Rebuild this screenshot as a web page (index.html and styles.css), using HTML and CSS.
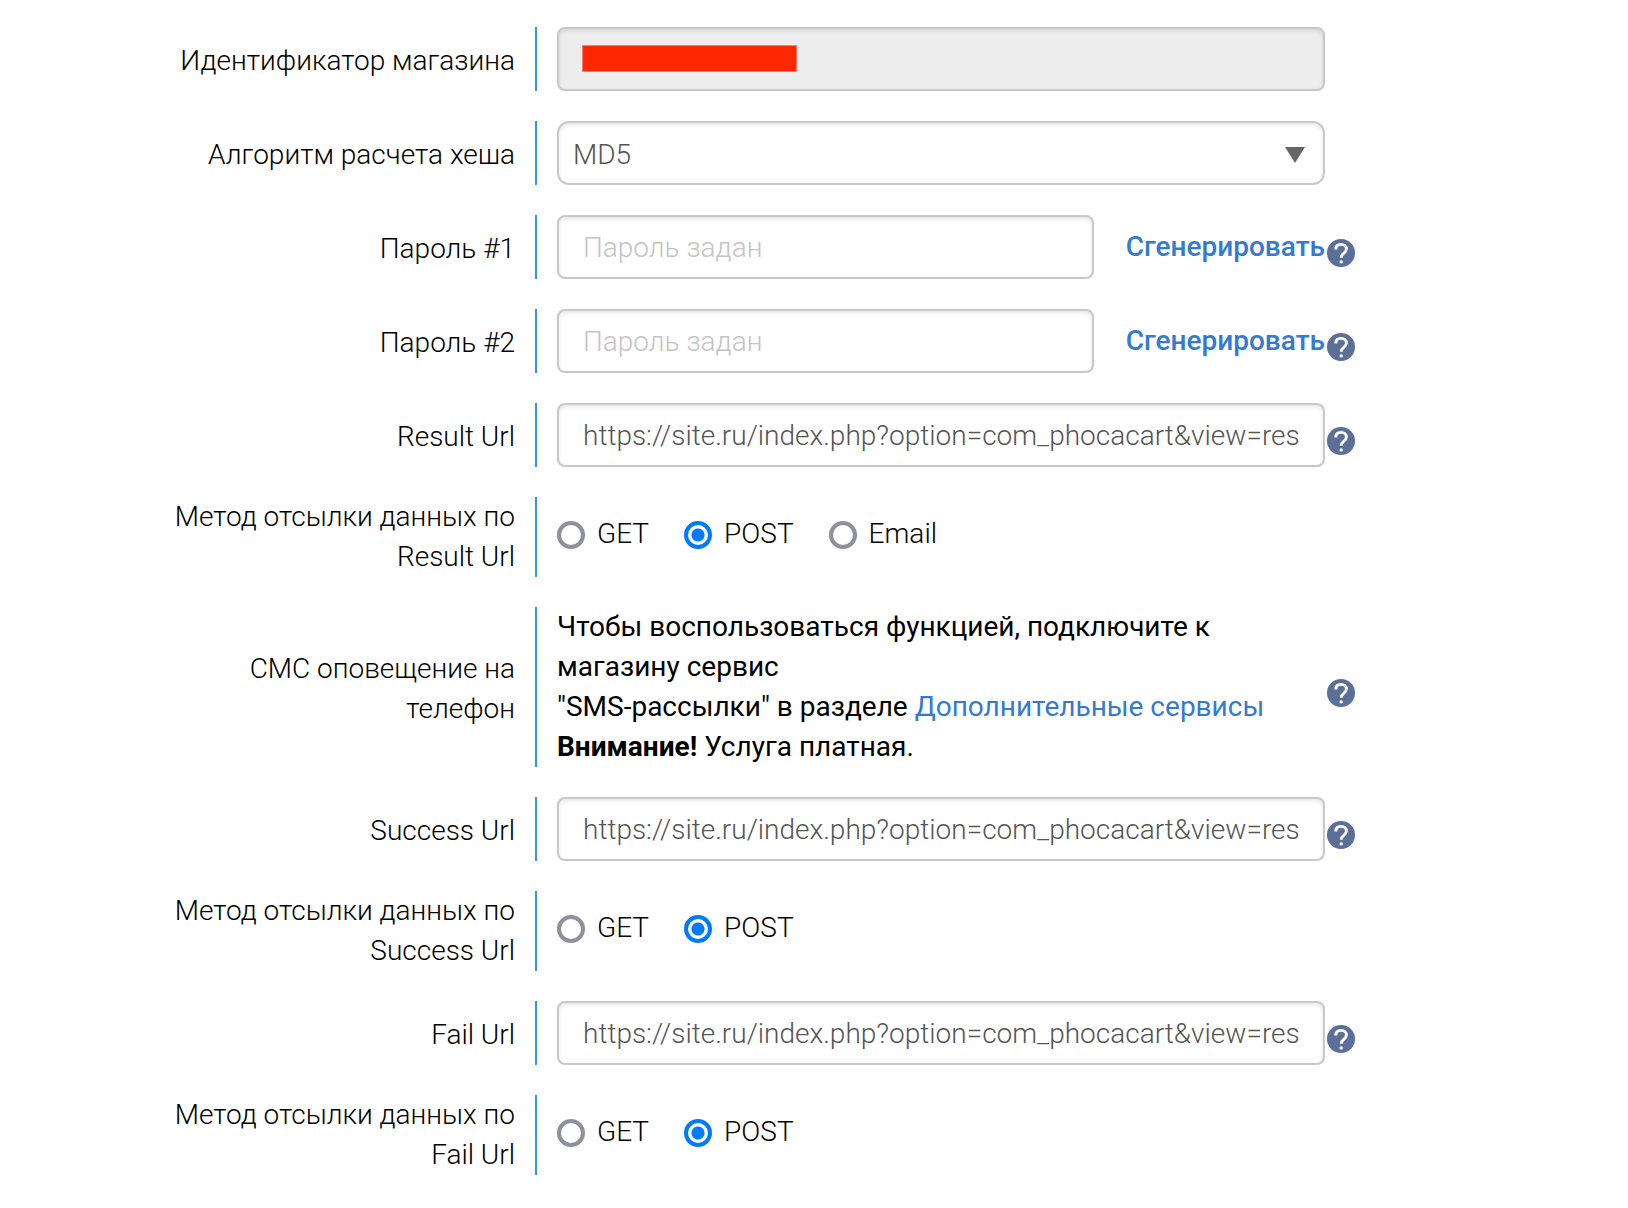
FILE: index.html
```html
<!DOCTYPE html>
<html lang="ru">
<head>
<meta charset="utf-8">
<meta name="viewport" content="width=device-width, initial-scale=1">
<title>Настройки магазина</title>
<link rel="stylesheet" href="styles.css">
</head>
<body>
<svg class="sprite" aria-hidden="true">
  <symbol id="help" viewBox="0 0 28 28">
    <circle cx="14" cy="14" r="14" fill="#5b6f98"/>
    <path d="M8.800 10.400C8.800 7 11 5.400 14 5.400s5.400 1.900 5.400 4.700c0 2.400-1.400 3.400-3 4.600-1.500 1.100-2.100 1.900-2.100 4.100" fill="none" stroke="#fff" stroke-width="2.900"/>
    <circle cx="14.200" cy="22.900" r="1.700" fill="#fff"/>
  </symbol>
</svg>
<form class="form">
  <div class="row">
    <label class="label label-field" for="shop-id">Идентификатор магазина</label>
    <div class="control redacted">
      <input class="input input-locked" id="shop-id" type="text" readonly>
      <span class="redaction"></span>
    </div>
  </div>
  <div class="row">
    <label class="label label-field" for="hash">Алгоритм расчета хеша</label>
    <div class="control select-wrap">
      <select class="input select" id="hash"><option>MD5</option></select>
    </div>
  </div>
  <div class="row">
    <label class="label label-field" for="pass1">Пароль #1</label>
    <div class="control password">
      <input class="input" id="pass1" type="password" placeholder="Пароль задан">
      <a class="link" href="#">Сгенерировать</a>
    </div>
    <button class="help" type="button" aria-label="Справка"><svg class="icon"><use href="#help"/></svg></button>
  </div>
  <div class="row">
    <label class="label label-field" for="pass2">Пароль #2</label>
    <div class="control password">
      <input class="input" id="pass2" type="password" placeholder="Пароль задан">
      <a class="link" href="#">Сгенерировать</a>
    </div>
    <button class="help" type="button" aria-label="Справка"><svg class="icon"><use href="#help"/></svg></button>
  </div>
  <div class="row">
    <label class="label label-field" for="result-url">Result Url</label>
    <div class="control"><input class="input" id="result-url" type="text" value="https://site.ru/index.php?option=com_phocacart&amp;view=res"></div>
    <button class="help" type="button" aria-label="Справка"><svg class="icon"><use href="#help"/></svg></button>
  </div>
  <div class="row" role="radiogroup" aria-labelledby="result-method">
    <span class="label" id="result-method">Метод отсылки данных по Result Url</span>
    <div class="control radios">
      <label class="option"><input class="radio" type="radio" name="result"><span>GET</span></label>
      <label class="option"><input class="radio" type="radio" name="result" checked><span>POST</span></label>
      <label class="option"><input class="radio" type="radio" name="result"><span>Email</span></label>
    </div>
  </div>
  <div class="row">
    <span class="label label-field">СМС оповещение на телефон</span>
    <p class="control note">Чтобы воспользоваться функцией, подключите к магазину сервис<br>"SMS-рассылки" в разделе <a class="note-link" href="#">Дополнительные сервисы</a><br><b>Внимание!</b> Услуга платная.</p>
    <button class="help" type="button" aria-label="Справка"><svg class="icon"><use href="#help"/></svg></button>
  </div>
  <div class="row">
    <label class="label label-field" for="success-url">Success Url</label>
    <div class="control"><input class="input" id="success-url" type="text" value="https://site.ru/index.php?option=com_phocacart&amp;view=res"></div>
    <button class="help" type="button" aria-label="Справка"><svg class="icon"><use href="#help"/></svg></button>
  </div>
  <div class="row" role="radiogroup" aria-labelledby="success-method">
    <span class="label" id="success-method">Метод отсылки данных по Success Url</span>
    <div class="control radios">
      <label class="option"><input class="radio" type="radio" name="success"><span>GET</span></label>
      <label class="option"><input class="radio" type="radio" name="success" checked><span>POST</span></label>
    </div>
  </div>
  <div class="row">
    <label class="label label-field" for="fail-url">Fail Url</label>
    <div class="control"><input class="input" id="fail-url" type="text" value="https://site.ru/index.php?option=com_phocacart&amp;view=res"></div>
    <button class="help" type="button" aria-label="Справка"><svg class="icon"><use href="#help"/></svg></button>
  </div>
  <div class="row" role="radiogroup" aria-labelledby="fail-method">
    <span class="label" id="fail-method">Метод отсылки данных по<br>Fail Url</span>
    <div class="control radios">
      <label class="option"><input class="radio" type="radio" name="fail"><span>GET</span></label>
      <label class="option"><input class="radio" type="radio" name="fail" checked><span>POST</span></label>
    </div>
  </div>
</form>
</body>
</html>
```
FILE: styles.css
```css
* {
  box-sizing: border-box;
}

body {
  margin: 0;
  background: #fff;
  color: #000;
  font: 300 28px/40px Roboto, sans-serif;
}

.sprite {
  display: none;
}

.form {
  display: flex;
  flex-direction: column;
  gap: 30px;
  padding: 27px 273px 33px 155px;
}

.row {
  display: grid;
  grid-template-columns: 382px minmax(0, 1fr) 30px;
  min-height: 64px;
}

.label {
  display: flex;
  flex-direction: column;
  justify-content: center;
  padding-right: 20px;
  border-right: 2px solid #3498db;
  text-align: right;
}

.label-field {
  padding-top: 4px;
}

.control {
  align-self: center;
  margin: 0 0 0 20px;
}

.input {
  display: block;
  width: 100%;
  height: 64px;
  padding: 0 24px;
  border: 2px solid #c8c8c8;
  border-radius: 8px;
  background: #fff;
  box-shadow: inset 0 2px 4px rgba(0, 0, 0, 0.1);
  color: #555;
  font: inherit;
}

.input::placeholder {
  color: #c4c4c4;
  opacity: 1;
}

.input-locked {
  background: #ededed;
}

.redacted,
.select-wrap {
  position: relative;
}

.redaction {
  position: absolute;
  top: 18px;
  left: 25px;
  width: 215px;
  height: 27px;
  border: 1px solid #fb7b66;
  background: #ff2800;
}

.select {
  padding: 3px 14px 0;
  border-radius: 12px;
  appearance: none;
}

.select-wrap::after {
  content: "";
  position: absolute;
  top: 26px;
  right: 20px;
  border: solid transparent;
  border-width: 16px 10px 0;
  border-top-color: #666;
  pointer-events: none;
}

.password {
  display: flex;
  align-items: center;
  gap: 32px;
}

.password .input {
  flex: 1;
  min-width: 0;
}

.link,
.note-link {
  color: #337ad2;
  text-decoration: none;
}

.link {
  font-weight: 500;
}

.help {
  align-self: center;
  justify-self: end;
  width: 28px;
  height: 28px;
  margin-top: 12px;
  padding: 0;
  border: 0;
  border-radius: 50%;
  background: none;
}

.icon {
  display: block;
  width: 28px;
  height: 28px;
}

.radios {
  display: flex;
  align-items: center;
  gap: 35px;
  padding-bottom: 6px;
}

.option {
  display: flex;
  align-items: center;
  gap: 12px;
}

.radio {
  width: 28px;
  height: 28px;
  margin: 2px 0 0;
  border: 4px solid #8f8f9d;
  border-radius: 50%;
  background: #fff;
  appearance: none;
}

.radio:checked {
  border-color: #007aff;
  background: radial-gradient(circle, #007aff 6px, #fff 7px);
}

.note {
  font-weight: 400;
}
```
